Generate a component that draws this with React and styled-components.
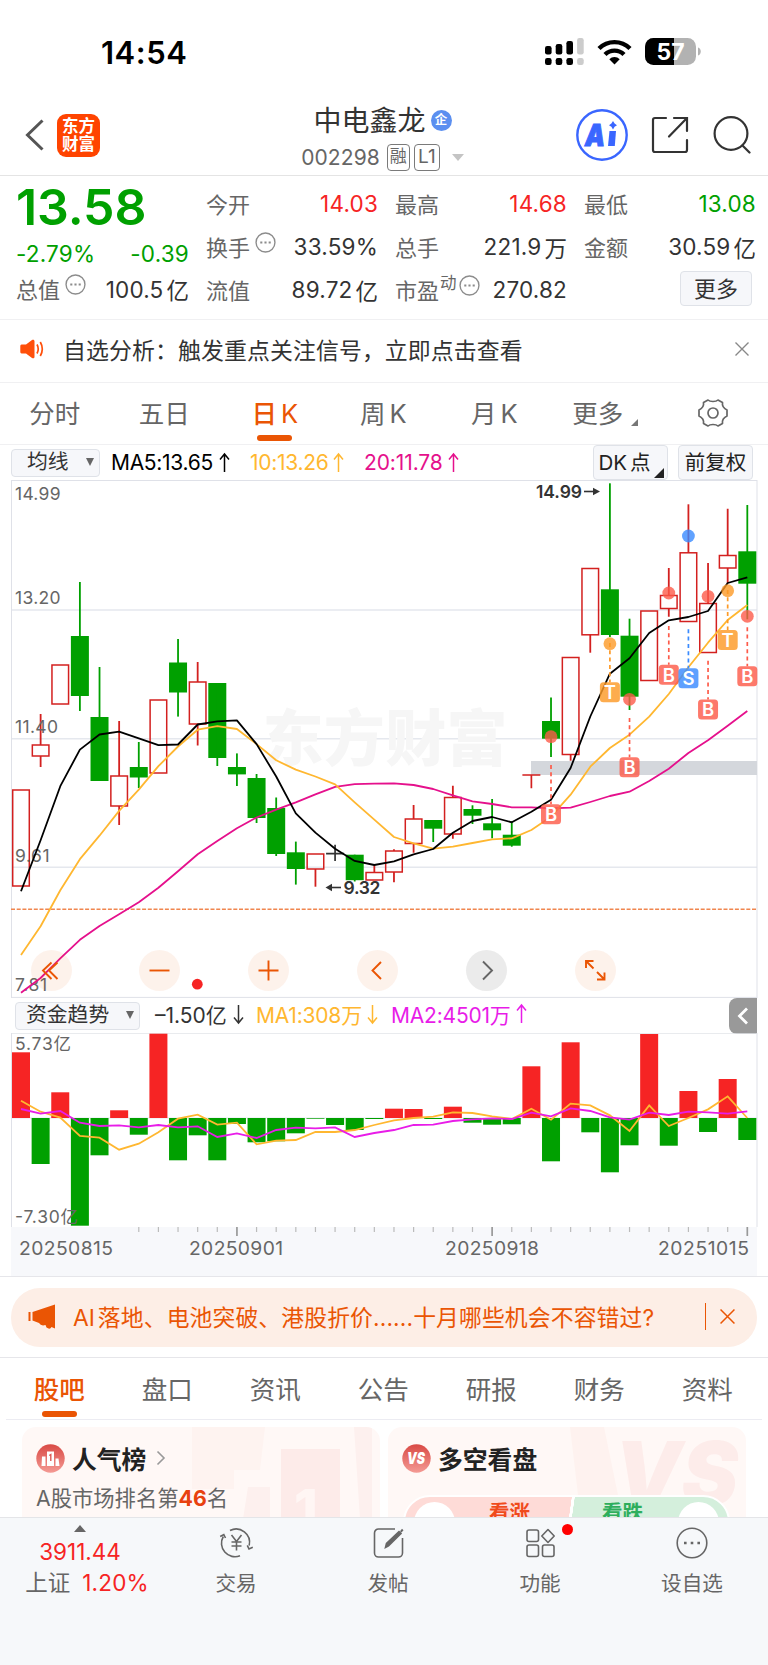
import { Fragment } from "react";
import styled, { createGlobalStyle } from "styled-components";

const FONT = `Inter, "Noto Sans CJK SC", sans-serif`;
const UP = "#f62424";
const DOWN = "#00a000";
const ORANGE = "#ea5504";

const GlobalStyle = createGlobalStyle`
  * {
    box-sizing: border-box;
  }
  body {
    margin: 0;
    background: #fff;
    font-family: ${FONT};
    color: #333;
  }
`;

const Page = styled.div`
  width: 768px;
  height: 1665px;
  overflow: hidden;
  display: flex;
  flex-direction: column;
  background: #fff;
  white-space: nowrap;
`;

const StatusBar = styled.header`
  height: 96px;
  padding: 8px 67px 0 101px;
  display: flex;
  align-items: center;
  justify-content: space-between;
`;

const Clock = styled.div`
  color: #000;
  font-size: 31px;
  font-weight: 600;
  letter-spacing: 0.5px;
`;

const StatusIcons = styled.div`
  display: flex;
  align-items: center;
  gap: 13px;
`;

const NavBar = styled.div`
  height: 80px;
  padding: 0 17px 1px 25px;
  display: flex;
  align-items: center;
  justify-content: space-between;
  border-bottom: 1px solid #e4e4e4;
`;

const NavSide = styled.div`
  width: ${(props) => (props.right ? 241 : 230)}px;
  display: flex;
  align-items: center;
  justify-content: ${(props) => (props.right ? "flex-end" : "flex-start")};
  gap: ${(props) => (props.right ? "23.5px" : "13px")};
`;

const Logo = styled.div`
  width: 43px;
  height: 43px;
  border-radius: 9px;
  background: #ff4400;
  color: #fff;
  font-size: 16.5px;
  font-weight: 700;
  line-height: 18px;
  text-align: center;
  padding-top: 3px;
`;

const NavTitle = styled.div`
  display: flex;
  flex-direction: column;
  align-items: center;
  padding-top: 7px;
`;

const NameRow = styled.div`
  height: 38px;
  display: flex;
  align-items: center;
  gap: 5px;
  font-size: 28px;
  padding-bottom: 5px;
`;

const CorpBadge = styled.span`
  width: 21px;
  height: 21px;
  border-radius: 50%;
  background: #5b8ff0;
  color: #fff;
  font-size: 12.5px;
  font-weight: 700;
  line-height: 20px;
  text-align: center;
  margin-top: 2px;
`;

const CodeRow = styled.div`
  height: 34px;
  display: flex;
  align-items: center;
  color: #666;
  font-size: 21px;
  letter-spacing: 0.1px;
`;

const Tag = styled.span`
  height: 27px;
  width: ${(props) => props.w}px;
  margin-left: ${(props) => props.ml}px;
  border: 1.5px solid #7a7a7a;
  border-radius: 4px;
  font-size: ${(props) => props.fs}px;
  line-height: 23px;
  text-align: center;
`;

const Caret = styled.span`
  margin-left: 12px;
  border: 6.5px solid transparent;
  border-top: 7px solid #c4c4c4;
  border-bottom: 0;
`;

const Quote = styled.section`
  height: 144px;
  padding: 6px 12px 0 16px;
  display: flex;
  justify-content: space-between;
  border-bottom: 1px solid #f0f0f2;
`;

const QuoteCol = styled.div`
  width: ${(props) => props.w}px;
  display: flex;
  flex-direction: column;
`;

const Price = styled.div`
  height: 49px;
  color: ${DOWN};
  font-size: 50px;
  font-weight: 600;
  line-height: 51px;
  letter-spacing: -0.1px;
`;

const Cell = styled.div`
  height: ${(props) => props.h || 43}px;
  display: flex;
  align-items: center;
  justify-content: space-between;
  color: ${(props) => props.color || "#333"};
  font-size: 22.5px;
  letter-spacing: 0.2px;
`;

const Unit = styled.span`
  margin-left: 3px;
  letter-spacing: ${(props) => props.ls || 0}px;
`;

const Label = styled.span`
  display: flex;
  align-items: center;
  color: #666;
  font-size: 22px;
  letter-spacing: 0;
  padding-bottom: 2px;
  margin-right: auto;
  sup {
    font-size: 16.5px;
    line-height: 16px;
    padding-bottom: 11px;
    margin-left: 1px;
  }
  svg {
    margin: 0 0 7px ${(props) => (props.tight ? 2 : 5)}px;
  }
`;

const MoreButton = styled.button`
  width: 72px;
  height: 35px;
  margin: 3px 4px 0 auto;
  border: 1px solid #dfe2e8;
  border-radius: 4px;
  background: #f6f7fa;
  color: #333;
  font: 22px/30px ${FONT};
  padding: 0;
`;

const Notice = styled.section`
  height: 63px;
  padding: 0 19px 4px 20px;
  display: flex;
  align-items: center;
  border-bottom: 1px solid #f0f0f2;
  font-size: 22.9px;
  letter-spacing: 0.1px;
`;

const NoticeText = styled.span`
  flex: 1;
  margin-left: 19px;
`;

const Periods = styled.nav`
  height: 62px;
  display: flex;
  border-bottom: 1px solid #f0f0f2;
`;

const Period = styled.div`
  width: 109.5px;
  height: 61px;
  display: flex;
  flex-direction: column;
  align-items: center;
  padding-top: 12px;
  color: ${(props) => (props.active ? ORANGE : "#666")};
  font-size: 25.5px;
  line-height: 37px;
  font-weight: ${(props) => (props.active ? 500 : 400)};
  > svg {
    margin: 3px 0 0 2px;
  }
`;

const PeriodName = styled.span`
  display: flex;
  align-items: flex-end;
  gap: 4px;
  margin-left: ${(props) => props.ml || 0}px;
`;

const PeriodUnit = styled.span`
  font-weight: 400;
`;

const Underline = styled.i`
  width: 35px;
  height: 5.5px;
  border-radius: 3px;
  background: ${ORANGE};
  margin: ${(props) => props.mt}px 0 0 ${(props) => props.ml || 0}px;
`;

const Corner = styled.i`
  border-left: ${(props) => props.size}px solid transparent;
  border-bottom: ${(props) => props.size}px solid ${(props) => props.color};
  margin: ${(props) => props.m};
`;

const Indicators = styled.div`
  height: ${(props) => props.h}px;
  padding: 0 ${(props) => props.pr}px 0 ${(props) => props.pl}px;
  display: flex;
  align-items: center;
`;

const Selector = styled.button`
  width: ${(props) => props.w}px;
  height: 28px;
  padding: 0 5px 1px ${(props) => props.pl}px;
  margin-right: ${(props) => props.mr}px;
  display: flex;
  align-items: center;
  justify-content: space-between;
  border: 1px solid #dfe2e8;
  border-radius: 4px;
  background: #f6f7fa;
  color: #333;
  font: 20.8px/24px ${FONT};
  i {
    border: 4.5px solid transparent;
    border-top: 8px solid #666;
    border-bottom: 0;
  }
`;

const IndexValue = styled.span`
  width: ${(props) => props.w}px;
  color: ${(props) => props.color};
  font-size: 21px;
  letter-spacing: ${(props) => props.ls}px;
  padding-bottom: ${(props) => props.pb || 0}px;
  display: flex;
  align-items: center;
  svg {
    margin-left: ${(props) => props.gap || 5}px;
  }
`;

const ToolButton = styled.button`
  width: 75px;
  height: 35px;
  margin-left: ${(props) => props.ml};
  display: flex;
  align-items: center;
  justify-content: center;
  gap: 3px;
  border: 1px solid #dfe2e8;
  border-radius: 4px;
  background: #f6f7fa;
  color: #222;
  font: 20.5px/30px ${FONT};
  padding: 0;
`;

const ChartBox = styled.section`
  position: relative;
  height: ${(props) => props.h}px;
  svg {
    display: block;
  }
`;

const ChartButtons = styled.div`
  position: absolute;
  left: 30.5px;
  bottom: 7px;
  display: flex;
  gap: 67.9px;
`;

const RoundButton = styled.button`
  width: 41px;
  height: 41px;
  padding: 0;
  border: 0;
  border-radius: 50%;
  background: ${(props) => (props.grey ? "rgba(120,120,120,0.15)" : "rgba(234,85,4,0.08)")};
  color: ${(props) => (props.grey ? "#666" : ORANGE)};
`;

const Collapse = styled.button`
  width: 28px;
  height: 36px;
  margin-left: auto;
  padding: 0;
  border: 0;
  border-radius: 8px 0 0 8px;
  background: #999;
  display: flex;
  align-items: center;
  justify-content: center;
`;

const BannerWrap = styled.section`
  height: 82px;
  padding: 11px 11px 0;
  border-top: 1px solid #e6e6ea;
  border-bottom: 1px solid #e6e6ea;
`;

const Banner = styled.div`
  height: 59px;
  border-radius: 29px;
  background: #fdeee6;
  color: ${ORANGE};
  padding: 0 22px 2px 17px;
  display: flex;
  align-items: center;
  font-size: 22.8px;
`;

const BannerText = styled.span`
  flex: 1;
  margin-left: 17px;
`;

const BannerRule = styled.i`
  width: 1.5px;
  height: 27px;
  margin-right: 14px;
  background: ${ORANGE};
`;

const Sections = styled.nav`
  height: 62px;
  margin: 0 6px;
  display: flex;
  border-bottom: 1px solid #ececf2;
`;

const SectionTab = styled.div`
  width: 108.1px;
  display: flex;
  flex-direction: column;
  align-items: center;
  padding-top: 12px;
  padding-right: 1.5px;
  font-size: 25.5px;
  line-height: 39px;
  color: ${(props) => (props.active ? ORANGE : "#666")};
  font-weight: ${(props) => (props.active ? 500 : 400)};
`;

const Cards = styled.section`
  height: 97px;
  padding: 7px 22px 0;
  display: flex;
  gap: 8px;
  overflow: hidden;
`;

const Card = styled.div`
  position: relative;
  width: 358px;
  height: 130px;
  padding: 11px 14px;
  border-radius: 14px;
  background: #fff8f6;
  overflow: hidden;
`;

const CardArt = styled.svg`
  position: absolute;
  top: 0;
  right: 0;
`;

const CardHead = styled.div`
  position: relative;
  height: 40px;
  display: flex;
  align-items: center;
  gap: 7px;
  color: #222;
  font-size: 24.8px;
  font-weight: 600;
`;

const More = styled.svg`
  margin-left: 3px;
`;

const Rank = styled.div`
  position: relative;
  color: #666;
  font-size: 21.3px;
  line-height: 36px;
  margin-top: 2px;
  b {
    color: #e8410f;
    font-weight: 700;
  }
`;

const VoteBar = styled.div`
  position: relative;
  width: 327px;
  height: 54px;
  margin: 17px 0 0 1px;
  border: 2px solid #fff;
  border-radius: 27px;
  display: flex;
  align-items: flex-start;
  background: linear-gradient(98deg, #fedbd7 50.5%, #fff 50.6%, #fff 51.4%, #d4efdc 51.5%);
`;

const Vote = styled.span`
  flex: 1;
  padding: ${(props) => props.pad};
  color: ${(props) => props.color};
  font-size: 20.5px;
  font-weight: 600;
  line-height: 32px;
`;

const VoteKnob = styled.i`
  width: 41px;
  height: 41px;
  margin: 5px 9px;
  border-radius: 50%;
  background: #fff;
`;

const BottomBar = styled.footer`
  height: 148px;
  border-top: 1px solid #e4e5e8;
  background: #f6f8fa;
  display: grid;
  grid-template-columns: 160px repeat(4, 152px);
  align-items: start;
`;

const MarketIndex = styled.div`
  display: flex;
  flex-direction: column;
  align-items: center;
  padding-top: 7px;
  color: ${UP};
  font-size: 22.5px;
  line-height: 31px;
  i {
    border: 6.5px solid transparent;
    border-bottom: 7px solid #666;
    border-top: 0;
    margin-bottom: 4px;
  }
  div {
    display: flex;
    gap: 12px;
    padding-left: 14px;
    letter-spacing: 0.2px;
  }
  label {
    color: #666;
    letter-spacing: 0;
  }
`;

const Action = styled.div`
  position: relative;
  display: flex;
  flex-direction: column;
  align-items: center;
  padding-top: 7px;
  color: #666;
  font-size: 20.6px;
  line-height: 30px;
  gap: 8px;
`;

const Dot = styled.i`
  position: absolute;
  top: 6px;
  left: 98px;
  width: 11px;
  height: 11px;
  border-radius: 50%;
  background: #ff0000;
`;

// [top, bottom, high, low, kind]
const candles = [
  [790, 886, 790, 886, "r"],
  [745, 756, 714, 767, "r"],
  [665, 704, 665, 704, "r"],
  [636, 696, 582, 711, "g"],
  [717, 781, 667, 781, "g"],
  [776, 806, 721, 825, "r"],
  [767, 777.5, 742, 788, "g"],
  [700, 773, 700, 773, "r"],
  [662.5, 692.5, 639, 716.6, "g"],
  [682, 724, 662, 745.5, "r"],
  [683, 758, 683, 766, "g"],
  [767, 774.4, 753.4, 786, "g"],
  [778, 818, 774, 823, "g"],
  [808, 854, 797.5, 856, "g"],
  [852.3, 869, 841.6, 884.6, "g"],
  [854, 869, 854, 886.7, "r"],
  [853.6, 853.6, 844.7, 861, "k"],
  [854.7, 880.2, 854.7, 881.5, "g"],
  [872.5, 880, 865.4, 880, "r"],
  [851, 872, 849.3, 882.3, "r"],
  [819, 843.5, 805, 852.7, "r"],
  [820, 828.7, 820, 842, "g"],
  [797.5, 834, 785.7, 838.7, "r"],
  [809, 815.7, 805.3, 824, "g"],
  [823.3, 830.3, 799, 838.3, "g"],
  [834.7, 845.7, 821.3, 846.7, "g"],
  [775, 775, 775, 788.3, "t"],
  [721, 738.7, 697.5, 757, "g"],
  [657.5, 754.5, 657.5, 760.7, "r"],
  [568.5, 634.8, 568.5, 652.7, "r"],
  [589.3, 635, 483.3, 637, "g"],
  [635.7, 696.7, 618.7, 710, "g"],
  [611, 680.5, 611, 680.5, "r"],
  [595.5, 608.5, 568, 616.7, "r"],
  [552.8, 621.5, 504.3, 621.5, "r"],
  [603.5, 652.5, 563, 652.5, "r"],
  [555.5, 568, 508.7, 583.3, "r"],
  [551.3, 583.7, 505, 619.3, "g"],
];

const ma5 = [
  891.2, 840.2, 786.2, 749.6, 734.5, 731.7, 738.3, 745.2, 744.5, 724.5, 721.4, 720.4, 744.1, 776.5,
  813.4, 832.6, 848.8, 860.9, 865, 861.3, 854.3, 849, 832.7, 821, 817, 822.3, 811.7, 799.7, 768,
  716.5, 673.7, 658.3, 633, 620.3, 617, 611, 583, 577.3,
];
const ma10 = [
  954.9, 926.3, 890.2, 859.2, 835.7, 810.9, 789.6, 766.2, 746.5, 729.7, 726.2, 729, 744.1, 760.3,
  769.6, 776.5, 784.4, 802.3, 819.6, 837, 843.3, 848.7, 846.7, 843, 839.3, 838.3, 830, 816.7,
  794.7, 766.7, 748, 734.7, 716.7, 694, 667.3, 642.7, 620, 605,
];
const ma20 = [
  992.8, 978, 958.4, 939.8, 926, 914.3, 902.2, 887.8, 871.2, 854.3, 840.9, 828.2, 817.5, 809.6,
  802.3, 794.4, 786.8, 784.1, 783.7, 783.3, 785, 789, 795.3, 801.3, 804, 807.3, 807.3, 808.3,
  807.7, 802, 796, 791.7, 781, 768.7, 753, 740.3, 725.7, 711,
];

// [index, dot y, dash start, badge y, letter]
const signals = [
  [27, 736.7, 765, 814.3, "B"],
  [30, 643.7, 643, 692.3, "T"],
  [31, 699.3, 718, 767.3, "B"],
  [33, 593, 626, 674.7, "B"],
  [34, 536, 629.3, 678.3, "S"],
  [35, 596.3, 660.7, 709.5, "B"],
  [36, 590.7, 590, 640, "T"],
  [37, 616.3, 627.3, 676.3, "B"],
];
const signalColors = { B: "#fd5b4a", T: "#fd9a27", S: "#3a8bff" };

const flows = [
  1052.3, 1164, 1092.3, 1225.7, 1155.3, 1110.3, 1134.7, 1033.7, 1160.3, 1135.3, 1160.3, 1124,
  1142.3, 1141.3, 1133.3, 1118.7, 1125, 1130, 1119, 1108.7, 1109, 1119, 1106.7, 1122.7, 1124.7,
  1124.3, 1066.3, 1161.3, 1042.3, 1132.3, 1172.3, 1145.3, 1034, 1145.7, 1091, 1132, 1079, 1140,
];
const flowMa1 = [
  332, 365, 383, 438, 443, 479, 461, 427, 386, 374, 404, 398, 463, 452, 450, 426, 426, 420, 405,
  391, 384, 380, 367, 369, 379, 387, 356, 389, 341, 346, 376, 423, 346, 408, 384, 358, 319, 384,
].map((v) => 990 + v / 3);
const flowMa2 = [
  357, 371, 363, 398, 408, 406, 412, 405, 412, 409, 441, 430, 444, 420, 413, 415, 412, 441, 429,
  420, 405, 404, 393, 388, 385, 387, 368, 379, 355, 363, 382, 389, 368, 375, 365, 367, 371, 364,
].map((v) => 990 + v / 3);

const cx = (i) => 21 + i * 19.63;
const toPoints = (values) => values.map((v, i) => `${cx(i).toFixed(1)},${v}`).join(" ");

const Candle = ({ data, i }) => {
  const [top, bottom, high, low, kind] = data;
  const x = cx(i);
  if (kind === "k" || kind === "t") {
    const stroke = kind === "k" ? "#333" : "#d3201f";
    return (
      <path d={`M${x - 9} ${top}H${x + 9}M${x} ${high}V${low}`} stroke={stroke} strokeWidth="1.7" fill="none" />
    );
  }
  if (kind === "g") {
    return (
      <g fill={DOWN}>
        <rect x={x - 9} y={top} width="18" height={bottom - top} />
        <rect x={x - 0.9} y={high} width="1.8" height={low - high} />
      </g>
    );
  }
  return (
    <g stroke="#d3201f" strokeWidth="1.5" fill="none">
      <path d={`M${x} ${high}V${top}M${x} ${bottom}V${low}`} strokeWidth="1.8" />
      <rect x={x - 8.3} y={top} width="16.6" height={bottom - top} />
    </g>
  );
};

const Signal = ({ data }) => {
  const [i, dot, from, badge, letter] = data;
  const color = signalColors[letter];
  const x = cx(i);
  return (
    <g>
      <circle cx={x} cy={dot} r="6.4" fill={color} opacity="0.8" />
      <path d={`M${x} ${from}V${badge - 10}`} stroke={color} strokeWidth="1.7" strokeDasharray="4 3.3" />
      <rect x={x - 10} y={badge - 10} width="20" height="20" rx="3.5" fill={color} opacity="0.82" />
      <text x={x} y={badge + 6.8} fontSize="18.5" fontWeight="600" fill="#fff" textAnchor="middle">
        {letter}
      </text>
    </g>
  );
};

const AxisLabel = ({ x = 15, y, w, children }) => (
  <text x={x} y={y} fontSize="17.5" fill="#666" textLength={w}>
    {children}
  </text>
);

const KChart = () => (
  <svg width="768" height="518" viewBox="0 480 768 518" fontFamily={FONT}>
    <g stroke="#e5e8ee" strokeWidth="1.4" fill="none">
      <path d="M11 610H757M11 738.8H757M11 867.3H757" />
      <path d="M11.5 480V998M757 480V998" stroke="#dfe1e8" strokeWidth="1" />
      <path d="M11 480.5H757M11 997.4H757" stroke="#dfe1e8" strokeWidth="1" />
    </g>
    <text x="385" y="761" fontSize="61" fontWeight="800" fill="#f6f6f6" textAnchor="middle" textLength="245">
      东方财富
    </text>
    <rect x="531" y="761" width="226" height="14" fill="#d4d7dc" />
    <path d="M11 909.3H757" stroke="#f0864f" strokeWidth="1.6" strokeDasharray="4 1.7" />
    {candles.map((c, i) => (
      <Candle key={i} data={c} i={i} />
    ))}
    <AxisLabel y="499.5" w="45.5">14.99</AxisLabel>
    <AxisLabel y="603.5" w="45.5">13.20</AxisLabel>
    <AxisLabel y="733.3" w="43">11.40</AxisLabel>
    <AxisLabel y="862" w="34.5">9.61</AxisLabel>
    <AxisLabel y="991" w="32">7.81</AxisLabel>
    <g fill="none" strokeWidth="1.8" strokeLinejoin="round">
      <polyline points={toPoints(ma20)} stroke="#e5108c" />
      <polyline points={toPoints(ma10)} stroke="#ffb730" />
      <polyline points={toPoints(ma5)} stroke="#000" />
    </g>
    {signals.map((s) => (
      <Signal key={s[0]} data={s} />
    ))}
    <g fontSize="17.5" fontWeight="600" fill="#333">
      <text x="536" y="498" textLength="46">14.99</text>
      <text x="343.5" y="894" textLength="37">9.32</text>
      <path d="M584 491.5H594" stroke="#333" strokeWidth="1.6" />
      <path d="M593 487.8L600 491.5L593 495.2z" />
      <path d="M341 887.5H330" stroke="#333" strokeWidth="1.6" />
      <path d="M332 883.8L325.5 887.5L332 891.2z" />
    </g>
    <circle cx="197.3" cy="984.2" r="5.4" fill={UP} />
  </svg>
);

const FlowChart = () => (
  <svg width="768" height="243" viewBox="0 1033 768 243" fontFamily={FONT}>
    <rect x="11" y="1227" width="746" height="49" fill="#f7f8fb" />
    <path d="M11 1033H757" stroke="#e2e4e8" strokeWidth="1.5" />
    <path d="M11 1118H757" stroke="#e5e8ee" />
    <path d="M11.5 1033V1227M757 1033V1227" stroke="#dfe1e8" />
    {flows.map((v, i) => (
      <rect
        key={i}
        x={cx(i) - 9}
        y={Math.min(v, 1118)}
        width="18"
        height={Math.abs(v - 1118)}
        fill={v < 1118 ? UP : DOWN}
      />
    ))}
    <AxisLabel y="1050.3" w="56">5.73亿</AxisLabel>
    <AxisLabel y="1223.3" w="63">-7.30亿</AxisLabel>
    <g fill="none" strokeWidth="1.8">
      <polyline points={toPoints(flowMa1)} stroke="#ffb730" />
      <polyline points={toPoints(flowMa2)} stroke="#e81ce8" />
    </g>
    {flows.map((v, i) => {
      if (i < 6) return null;
      const major = i === 11 || i === 24 || i === 37;
      return (
        <path
          key={i}
          d={`M${cx(i)} 1227v${major ? 9 : 5}`}
          stroke={major ? "#999" : "#bbb"}
          strokeWidth={major ? 1.7 : 1.2}
        />
      );
    })}
    <g fontSize="19.3" fill="#666">
      <text x="19" y="1255" textLength="94">20250815</text>
      <text x="189" y="1255" textLength="94">20250901</text>
      <text x="445" y="1255" textLength="94">20250918</text>
      <text x="658" y="1255" textLength="91">20251015</text>
    </g>
  </svg>
);

const Arrow = ({ down }) => (
  <svg width="11" height="22" viewBox="0 0 11 22" fill="none" stroke="currentColor" strokeWidth="1.5">
    <path d={down ? "M5.5 2V20M1 14.5L5.5 20L10 14.5" : "M5.5 20V2M1 7.5L5.5 2L10 7.5"} />
  </svg>
);

const Info = () => (
  <svg width="21" height="21" viewBox="0 0 20 20" fill="none" stroke="#8c8c8c" strokeWidth="1.3">
    <circle cx="10" cy="10" r="9" />
    <path d="M5 10h2M9 10h2M13 10h2" strokeWidth="1.8" />
  </svg>
);

const Cross = ({ size, color }) => (
  <svg width={size} height={size} viewBox="0 0 14 14" stroke={color} strokeWidth="1.4">
    <path d="M0.5 0.5L13.5 13.5M13.5 0.5L0.5 13.5" />
  </svg>
);

const Signals = () => (
  <svg width="39" height="28" viewBox="0 0 39 28">
    {[8, 6, 3, 0].map((top, i) => (
      <g key={top} fill={i === 3 ? "#ccc" : "#000"}>
        <rect x={i * 10.7} y={top} width="6.6" height={16.5 - top} rx="2.2" />
        <rect x={i * 10.7} y="20" width="6.6" height="7" rx="2.2" />
      </g>
    ))}
  </svg>
);

const Wifi = () => (
  <svg width="35" height="26" viewBox="0 0 35 26" fill="none" stroke="#000" strokeWidth="4.4">
    <path d="M2 9.5A22 22 0 0 1 33 9.5" />
    <path d="M8 15.5A13.5 13.5 0 0 1 27 15.5" />
    <path d="M12.3 20.2A7.5 7.5 0 0 1 22.7 20.2L17.5 25.5z" fill="#000" stroke="none" />
  </svg>
);

const Battery = () => (
  <svg width="56" height="28" viewBox="0 0 56 28" fontFamily={FONT}>
    <clipPath id="cell">
      <rect width="51" height="27" rx="8.5" />
    </clipPath>
    <g clipPath="url(#cell)">
      <rect width="51" height="27" fill="#b2b2b2" />
      <rect width="29" height="27" fill="#000" />
    </g>
    <path d="M53 9.5C56.7 10.5 56.7 16.5 53 17.5z" fill="#b2b2b2" />
    <text x="25.5" y="21.5" fontSize="23" fontWeight="700" fill="#fff" textAnchor="middle">
      57
    </text>
  </svg>
);

const roundIcons = [
  "M20.5 12.5L12 20.5L20.5 29M26.5 12.5L18 20.5L26.5 29",
  "M10.5 20.5H30.5",
  "M10.5 20.5H30.5M20.5 10.5V30.5",
  "M24 12L15.5 20.5L24 29",
  "M17 11.5L26 20.5L17 29.5",
  "M18.5 18.5L11 11M11 18V11H18.5M22 22L29.5 29.5M29.5 22.5V29.5H22",
];

const stats = [
  [
    { label: "今开", value: "14.03", color: UP },
    { label: "换手", value: "33.59%", info: true },
    { label: "流值", value: "89.72", unit: "亿" },
  ],
  [
    { label: "最高", value: "14.68", color: UP },
    { label: "总手", value: "221.9", unit: "万" },
    { label: "市盈", value: "270.82", info: true, sup: "动" },
  ],
  [
    { label: "最低", value: "13.08", color: DOWN },
    { label: "金额", value: "30.59", unit: "亿" },
  ],
];

const actions = [
  [
    "交易",
    <Fragment key="i">
      <path d="M11 5.5A13.5 13.5 0 0 1 30.2 20.5M21 30.8A13.5 13.5 0 0 1 4.3 11.5" />
      <path d="M1.2 11.5L4.8 9.5L6.5 13M33.8 22.3L30 24L28.3 20.3" />
      <path d="M12.5 10L17.5 16.5L22.5 10M17.5 16.5V25.5M12.5 17H22.5M12.5 21H22.5" />
    </Fragment>,
  ],
  [
    "发帖",
    <Fragment key="i">
      <path d="M24 4H7.5A4 4 0 0 0 3.5 8V28A4 4 0 0 0 7.5 32H27.5A4 4 0 0 0 31.5 28V13" />
      <path d="M14.5 22.5L15.5 18.5L28 6.5L30 8.5L17.5 20.8z" fill="currentColor" />
      <path d="M30 5L31.5 6.3" strokeWidth="3" />
    </Fragment>,
  ],
  [
    "功能",
    <Fragment key="i">
      <rect x="4" y="5" width="11.5" height="11.5" rx="2" />
      <rect x="4" y="20" width="11.5" height="11.5" rx="2" />
      <rect x="19.5" y="20" width="11.5" height="11.5" rx="2" />
      <path d="M25 4.5L31.2 11L25 17.5L18.8 11z" strokeLinejoin="round" />
    </Fragment>,
  ],
  [
    "设自选",
    <Fragment key="i">
      <circle cx="17" cy="18" r="14.8" />
      <path d="M9 18h2.6M15.7 18h2.6M22.4 18h2.6" strokeWidth="2.6" />
    </Fragment>,
  ],
];

const App = () => {
  return (
    <Page>
      <GlobalStyle />
      <StatusBar>
        <Clock>14:54</Clock>
        <StatusIcons>
          <Signals />
          <Wifi />
          <Battery />
        </StatusIcons>
      </StatusBar>

      <NavBar>
        <NavSide>
          <svg width="19" height="32" viewBox="0 0 19 32" fill="none" stroke="#555" strokeWidth="3">
            <path d="M17.5 1.5L2.5 16L17.5 30.5" />
          </svg>
          <Logo>
            东方
            <br />
            财富
          </Logo>
        </NavSide>
        <NavTitle>
          <NameRow>
            中电鑫龙 <CorpBadge>企</CorpBadge>
          </NameRow>
          <CodeRow>
            002298
            <Tag w={23} ml={7} fs={17}>融</Tag>
            <Tag w={26} ml={4} fs={19}>L1</Tag>
            <Caret />
          </CodeRow>
        </NavTitle>
        <NavSide right>
          <svg width="52" height="52" viewBox="0 0 52 52" fill="#3a66ff" fontFamily={FONT}>
            <circle cx="26" cy="26" r="24.7" fill="none" stroke="#3a66ff" strokeWidth="2.4" />
            <text x="9" y="36.5" fontSize="30" fontWeight="900" fontStyle="italic" stroke="#3a66ff" strokeWidth="1" textLength="20" lengthAdjust="spacingAndGlyphs">
              A
            </text>
            <path d="M33.5 22H40L38.8 37H32z" />
            <path d="M37 12L38.6 14.6L41 16.2L38.6 17.8L37 20.4L35.4 17.8L33 16.2L35.4 14.6z" />
          </svg>
          <svg width="38" height="38" viewBox="0 0 38 38" fill="none" stroke="#333" strokeWidth="2.2">
            <path d="M15 2H4A2 2 0 0 0 2 4V34A2 2 0 0 0 4 36H34A2 2 0 0 0 36 34V24M36 15V2H23M35.5 2.5L18 20.5" strokeLinecap="round" />
          </svg>
          <svg width="38" height="38" viewBox="0 0 38 38" fill="none" stroke="#333" strokeWidth="2.2">
            <circle cx="18" cy="17.5" r="16.4" />
            <path d="M29.5 29.5L36.5 36.5" strokeLinecap="round" />
          </svg>
        </NavSide>
      </NavBar>

      <Quote>
        <QuoteCol w={173}>
          <Price>13.58</Price>
          <Cell h={44} color={DOWN}>
            <span>-2.79%</span>
            <span>-0.39</span>
          </Cell>
          <Cell h={28}>
            <Label>
              总值
              <Info />
            </Label>
            100.5<Unit>亿</Unit>
          </Cell>
        </QuoteCol>
        {stats.map((col) => (
          <QuoteCol w={172} key={col[0].label}>
            {col.map(({ label, value, unit, color, info, sup }) => (
              <Cell key={label} color={color}>
                <Label tight={sup ? "1" : undefined}>
                  {label}
                  {sup && <sup>{sup}</sup>}
                  {info && <Info />}
                </Label>
                {value}
                {unit && <Unit>{unit}</Unit>}
              </Cell>
            ))}
            {col.length === 2 && <MoreButton>更多</MoreButton>}
          </QuoteCol>
        ))}
      </Quote>

      <Notice>
        <svg width="24" height="20" viewBox="0 0 24 20" fill="#ff4f0a">
          <path d="M1.5 5.5H6L12 1C13.3 0.2 14.5 0.8 14.5 2.2V17.8C14.5 19.2 13.3 19.8 12 19L6 14.5H1.5A1.5 1.5 0 0 1 0.3 13V7A1.5 1.5 0 0 1 1.5 5.5z" />
          <path d="M17 5.5Q19.5 10 17 14.5M20.3 3Q24.3 10 20.3 17" fill="none" stroke="#ff4f0a" strokeWidth="1.7" />
        </svg>
        <NoticeText>自选分析：触发重点关注信号，立即点击查看</NoticeText>
        <Cross size={14} color="#888" />
      </Notice>

      <Periods>
        <Period>分时</Period>
        <Period>五日</Period>
        <Period active>
          <PeriodName ml={2}>
            日<PeriodUnit>K</PeriodUnit>
          </PeriodName>
          <Underline mt={3} ml={1} />
        </Period>
        <Period>
          <PeriodName>
            周<PeriodUnit>K</PeriodUnit>
          </PeriodName>
        </Period>
        <Period>
          <PeriodName ml={3}>
            月<PeriodUnit>K</PeriodUnit>
          </PeriodName>
        </Period>
        <Period>
          <PeriodName ml={1}>
            更多
            <Corner size={7} color="#777" m="0 -5px 6px 4px" />
          </PeriodName>
        </Period>
        <Period>
          <svg width="30" height="30" viewBox="0 0 30 30" fill="none" stroke="#666" strokeWidth="1.7">
            <path d="M10 2C12 4 18 4 20 2L24.5 4.5C24 7.5 26 10.5 29 12V18C26 19.5 24 22.5 24.5 25.5L20 28C18 26 12 26 10 28L5.5 25.5C6 22.5 4 19.5 1 18V12C4 10.5 6 7.5 5.5 4.5z" strokeLinejoin="round" />
            <circle cx="15" cy="15" r="5" />
          </svg>
        </Period>
      </Periods>

      <Indicators h={35} pl={11} pr={15}>
        <Selector w={89} pl={15} mr={11}>
          均线 <i />
        </Selector>
        <IndexValue color="#000" w={139} ls={-0.3} gap={6}>
          MA5:13.65
          <Arrow />
        </IndexValue>
        <IndexValue color="#ffb730" w={114} ls={-0.3}>
          10:13.26
          <Arrow />
        </IndexValue>
        <IndexValue color="#e5108c" w={110} ls={-0.1}>
          20:11.78
          <Arrow />
        </IndexValue>
        <ToolButton ml="auto">
          <span>DK</span>点
          <Corner size={10} color="#222" m="20px -1px 0 0" />
        </ToolButton>
        <ToolButton ml="10px">前复权</ToolButton>
      </Indicators>

      <ChartBox h={518}>
        <KChart />
        <ChartButtons>
          {roundIcons.map((d, i) => (
            <RoundButton key={d} grey={i === 4 ? "1" : undefined}>
              <svg width="41" height="41" viewBox="0 0 41 41" fill="none" stroke="currentColor" strokeWidth="1.9">
                <path d={d} />
              </svg>
            </RoundButton>
          ))}
        </ChartButtons>
      </ChartBox>

      <Indicators h={35} pl={15} pr={11}>
        <Selector w={125} pl={10} mr={15}>
          资金趋势 <i />
        </Selector>
        <IndexValue color="#333" w={101} ls={0} gap={6} pb={3}>
          –1.50亿
          <Arrow down />
        </IndexValue>
        <IndexValue color="#ffb730" w={135} ls={-0.2} pb={3}>
          MA1:308万
          <Arrow down />
        </IndexValue>
        <IndexValue color="#e81ce8" w={150} ls={-0.2} pb={3}>
          MA2:4501万
          <Arrow />
        </IndexValue>
        <Collapse>
          <svg width="12" height="18" viewBox="0 0 12 18" fill="none" stroke="#fff" strokeWidth="2.8">
            <path d="M10 1.5L2.5 9L10 16.5" />
          </svg>
        </Collapse>
      </Indicators>

      <ChartBox h={243}>
        <FlowChart />
      </ChartBox>

      <BannerWrap>
        <Banner>
          <svg width="28" height="25" viewBox="0 0 28 25" fill={ORANGE}>
            <path d="M0.5 8H2.5V17H0.5zM4.5 8L27 0.5V24.5L23.5 23Q22 26 18.5 23.5L17.5 21Q13 22.5 11 19L4.5 16.5z" />
          </svg>
          <BannerText>
            AI<Unit ls={0.13}>落地、电池突破、港股折价......十月哪些机会不容错过?</Unit>
          </BannerText>
          <BannerRule />
          <Cross size={15} color={ORANGE} />
        </Banner>
      </BannerWrap>

      <Sections>
        {["股吧", "盘口", "资讯", "公告", "研报", "财务", "资料"].map((name, i) => (
          <SectionTab key={name} active={i === 0}>
            {name}
            {i === 0 && <Underline mt={2} />}
          </SectionTab>
        ))}
      </Sections>

      <Cards>
        <Card>
          <CardArt width="190" height="92" viewBox="0 0 190 92" fill="#fdebe9">
            <path d="M2 0H75L70 43H44V62H2z" fill="#fef3f0" />
            <path d="M58 60H80V92H53zM164 0H182V92H170z" fill="#fdf0ee" />
            <path d="M91 22H150V92H91z" />
            <text x="104" y="101" fontSize="54" fontWeight="800" fill="#fff6f4" fontFamily={FONT}>1</text>
          </CardArt>
          <CardHead>
            <svg width="29" height="29" viewBox="0 0 29 29">
              <defs>
                <linearGradient id="badge" x1="0" y1="0" x2="0" y2="1">
                  <stop offset="0" stopColor="#d94a45" />
                  <stop offset="1" stopColor="#f49a94" />
                </linearGradient>
              </defs>
              <circle cx="14.5" cy="14.5" r="14.2" fill="url(#badge)" />
              <path d="M6 12.5H9.5V22H5.5zM11 7.5H18V22H11zM19.5 14.5H22.5L23.5 22H19.5z" fill="#fff" />
              <path d="M13.2 11.5L14.8 10.5V17" stroke="#dc5a55" strokeWidth="1.4" fill="none" />
            </svg>
            人气榜
            <More width="10" height="16" viewBox="0 0 10 16" fill="none" stroke="#999" strokeWidth="1.6">
              <path d="M1.5 1.5L8 8L1.5 14.5" />
            </More>
          </CardHead>
          <Rank>
            A股市场排名第<b>46</b>名
          </Rank>
        </Card>
        <Card>
          <CardArt width="190" height="92" viewBox="0 0 190 92" fill="#fdecea">
            <path d="M14 0H48L62 68H22z" fill="#fef2ef" />
            <text x="58" y="78" fontSize="88" fontWeight="900" fontStyle="italic" fontFamily={FONT} textLength="124" lengthAdjust="spacingAndGlyphs">
              VS
            </text>
          </CardArt>
          <CardHead>
            <svg width="29" height="29" viewBox="0 0 29 29" fontFamily={FONT}>
              <circle cx="14.5" cy="14.5" r="14.2" fill="url(#badge)" />
              <text x="14" y="20.3" fontSize="16.5" fontWeight="900" fontStyle="italic" fill="#fff" textAnchor="middle" textLength="18" lengthAdjust="spacingAndGlyphs">
                VS
              </text>
            </svg>
            多空看盘
          </CardHead>
          <VoteBar>
            <VoteKnob />
            <Vote color="#f04a1c" pad="0 0 0 25px">看涨</Vote>
            <Vote color="#2eae5c" pad="0 0 0 46px">看跌</Vote>
            <VoteKnob />
          </VoteBar>
        </Card>
      </Cards>

      <BottomBar>
        <MarketIndex>
          <i />
          3911.44
          <div>
            <label>上证</label>1.20%
          </div>
        </MarketIndex>
        {actions.map(([name, icon]) => (
          <Action key={name}>
            <svg width="35" height="36" viewBox="0 0 35 36" fill="none" stroke="currentColor" strokeWidth="1.6">
              {icon}
            </svg>
            {name}
            {name === "功能" && <Dot />}
          </Action>
        ))}
      </BottomBar>
    </Page>
  );
};

export default App;
